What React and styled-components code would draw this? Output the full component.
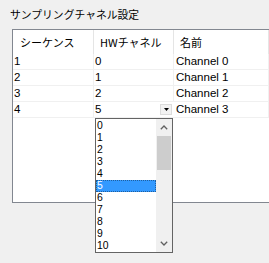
import React from "react";
import styled, { createGlobalStyle } from "styled-components";

const GlobalStyle = createGlobalStyle`
  html, body { margin: 0; padding: 0; background: #f0f0f0; overflow: hidden; }
  body { width: 269px; height: 263px; font-family: "Liberation Sans", "Noto Sans CJK JP", sans-serif; color: #000; }
`;

const Title = styled.div`
  height: 29px;
  padding-left: 10px;
  box-sizing: border-box;
  line-height: 28px;
  font-family: "Noto Sans CJK JP", sans-serif;
  font-size: 10.8px;
  white-space: nowrap;
`;

const Panel = styled.div`
  margin-left: 12px;
  width: 257px;
  height: 174px;
  box-sizing: border-box;
  border: 1px solid #828790;
  border-right: none;
  background: #fff;
`;

const Grid = styled.div`
  display: grid;
  grid-template-columns: 81px 80px 1fr;
`;

const Header = styled(Grid)`
  height: 24px;
`;

const HeaderCell = styled.div`
  padding-left: ${(p) => p.$pad}px;
  border-right: 1px solid #e5e5e5;
  font-family: "Noto Sans CJK JP", sans-serif;
  font-size: 11px;
  line-height: 24px;
  white-space: nowrap;
`;

const Row = styled(Grid)`
  height: 16px;
  box-sizing: border-box;
  border-bottom: 1px solid #f0f0f0;
`;

const Cell = styled.div`
  padding-left: ${(p) => p.$pad}px;
  border-right: 1px solid #f0f0f0;
  font-size: 11.5px;
  line-height: 15px;
  white-space: nowrap;
`;

const ComboCell = styled.div`
  position: relative;
  display: flex;
  align-items: center;
  justify-content: space-between;
  padding-left: 1px;
  padding-right: 2px;
  background: #fff;
  font-size: 11.5px;
  line-height: 15px;
`;

const DropButton = styled.div`
  width: 12px;
  height: 11px;
  box-sizing: border-box;
  border: 1px solid #dcdcdc;
  background: #f3f3f3;
  display: flex;
  align-items: center;
  justify-content: center;
`;

const DropList = styled.div`
  position: absolute;
  left: 1px;
  top: 16px;
  width: 78px;
  height: 135px;
  box-sizing: border-box;
  border: 1px solid #646464;
  background: #fff;
  display: flex;
  z-index: 2;
`;

const Items = styled.div`
  flex: 1;
  padding-top: 1px;
`;

const Item = styled.div`
  height: 12px;
  line-height: 12px;
  font-size: 10.4px;
  padding-left: 1px;
  background: ${(p) => (p.$selected ? "#3399ff" : "transparent")};
  color: ${(p) => (p.$selected ? "#fff" : "#000")};
  outline: ${(p) => (p.$selected ? "1px dotted #1f5f9f" : "none")};
  outline-offset: -1px;
`;

const ScrollBar = styled.div`
  width: 16px;
  background: #f0f0f0;
  display: flex;
  flex-direction: column;
`;

const ScrollBtn = styled.div`
  height: 17px;
  display: flex;
  align-items: center;
  justify-content: center;
`;

const Thumb = styled.div`
  height: 34px;
  margin: 0 1px;
  background: #cdcdcd;
`;

const Track = styled.div`
  flex: 1;
`;

const Chevron = ({ down }) => (
  <svg width="8" height="5" viewBox="0 0 8 5">
    <polyline
      points={down ? "0.8,0.8 4,4 7.2,0.8" : "0.8,4.2 4,1 7.2,4.2"}
      fill="none"
      stroke="#606060"
      strokeWidth="1.3"
    />
  </svg>
);

const rows = [
  ["1", "0", "Channel 0"],
  ["2", "1", "Channel 1"],
  ["3", "2", "Channel 2"],
];

const options = ["0", "1", "2", "3", "4", "5", "6", "7", "8", "9", "10"];

export default function App() {
  return (
    <>
      <GlobalStyle />
      <Title>サンプリングチャネル設定</Title>
      <Panel>
        <Header>
          <HeaderCell $pad={7}>シーケンス</HeaderCell>
          <HeaderCell $pad={6}>HWチャネル</HeaderCell>
          <HeaderCell $pad={6}>名前</HeaderCell>
        </Header>
        {rows.map((r) => (
          <Row key={r[0]}>
            <Cell $pad={1}>{r[0]}</Cell>
            <Cell $pad={1}>{r[1]}</Cell>
            <Cell $pad={2}>{r[2]}</Cell>
          </Row>
        ))}
        <Row>
          <Cell $pad={1}>4</Cell>
          <ComboCell>
            <span>5</span>
            <DropButton>
              <svg width="5" height="3" viewBox="0 0 5 3">
                <polygon points="0,0 5,0 2.5,3" fill="#000" />
              </svg>
            </DropButton>
            <DropList>
              <Items>
                {options.map((o) => (
                  <Item key={o} $selected={o === "5"}>
                    {o}
                  </Item>
                ))}
              </Items>
              <ScrollBar>
                <ScrollBtn>
                  <Chevron />
                </ScrollBtn>
                <Thumb />
                <Track />
                <ScrollBtn>
                  <Chevron down />
                </ScrollBtn>
              </ScrollBar>
            </DropList>
          </ComboCell>
          <Cell $pad={2}>Channel 3</Cell>
        </Row>
      </Panel>
    </>
  );
}
